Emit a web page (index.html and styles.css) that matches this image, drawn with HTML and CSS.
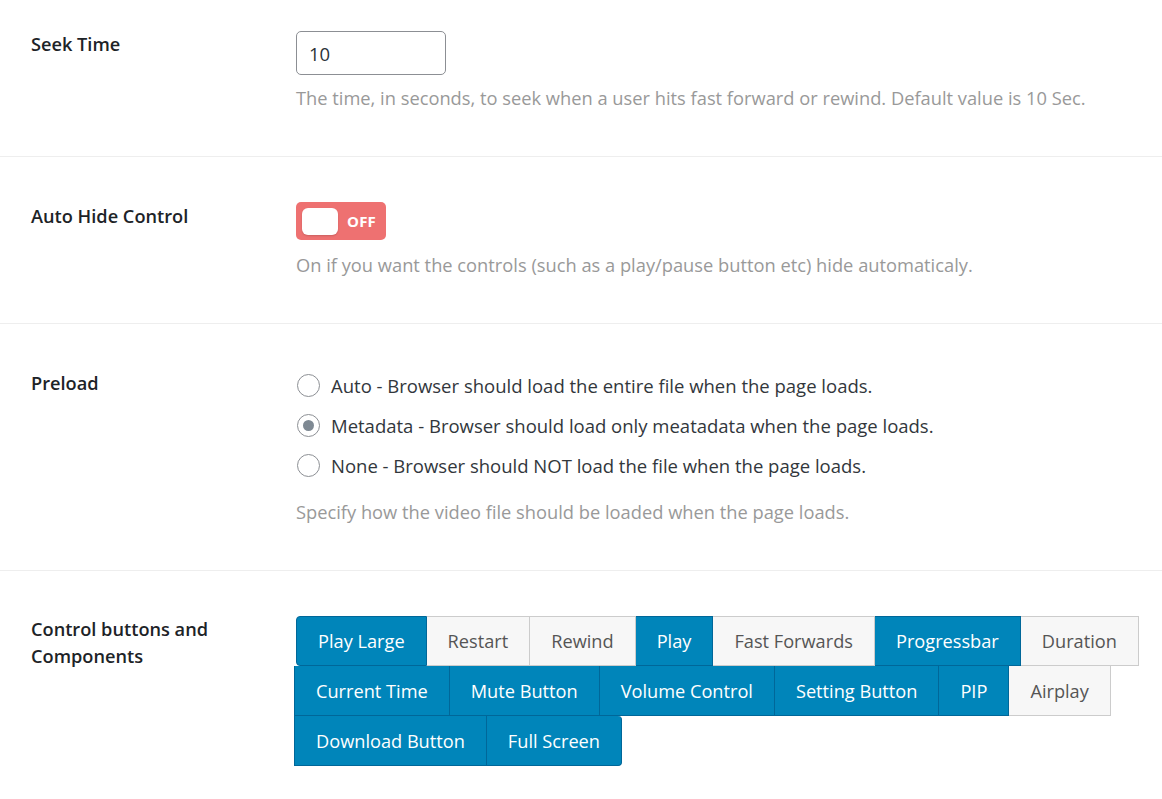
FILE: index.html
```html
<!DOCTYPE html>
<html lang="en">
<head>
<meta charset="utf-8">
<title>Player settings</title>
<link rel="stylesheet" href="styles.css">
</head>
<body>
<div class="settings">
  <div class="row">
    <div class="label">Seek Time</div>
    <div class="field">
      <input class="num" type="text" value="10">
      <p class="desc">The time, in seconds, to seek when a user hits fast forward or rewind. Default value is 10 Sec.</p>
    </div>
  </div>
  <div class="row">
    <div class="label">Auto Hide Control</div>
    <div class="field">
      <div class="toggle"><span class="knob"></span><span class="toggle-text">OFF</span></div>
      <p class="desc desc-toggle">On if you want the controls (such as a play/pause button etc) hide automaticaly.</p>
    </div>
  </div>
  <div class="row">
    <div class="label">Preload</div>
    <div class="field">
      <ul class="radios">
        <li><span class="radio"></span>Auto - Browser should load the entire file when the page loads.</li>
        <li><span class="radio checked"></span>Metadata - Browser should load only meatadata when the page loads.</li>
        <li><span class="radio"></span>None - Browser should NOT load the file when the page loads.</li>
      </ul>
      <p class="desc desc-far">Specify how the video file should be loaded when the page loads.</p>
    </div>
  </div>
  <div class="row row-last">
    <div class="label label-multi">Control buttons and<br>Components</div>
    <div class="field">
      <div class="btn-group">
        <div class="btn-row first-row">
          <span class="btn on first">Play Large</span>
          <span class="btn">Restart</span>
          <span class="btn">Rewind</span>
          <span class="btn on">Play</span>
          <span class="btn">Fast Forwards</span>
          <span class="btn on">Progressbar</span>
          <span class="btn">Duration</span>
        </div>
        <div class="btn-row">
          <span class="btn on">Current Time</span>
          <span class="btn on">Mute Button</span>
          <span class="btn on">Volume Control</span>
          <span class="btn on">Setting Button</span>
          <span class="btn on">PIP</span>
          <span class="btn">Airplay</span>
        </div>
        <div class="btn-row">
          <span class="btn on">Download Button</span>
          <span class="btn on last">Full Screen</span>
        </div>
      </div>
    </div>
  </div>
</div>
</body>
</html>
```
FILE: styles.css
```css
* { box-sizing: border-box; }
html, body { margin: 0; padding: 0; background: #fff; }
body {
  font-family: "Open Sans", "Noto Sans", sans-serif;
  color: #3c434a;
}
.settings { width: 1162px; }
.row {
  display: grid;
  grid-template-columns: 265px 1fr;
  padding: 46px 0 45px 31px;
  border-bottom: 1px solid #eeeeee;
}
.row:first-child { padding-top: 31px; }
.row-last { border-bottom: none; padding-top: 45px; padding-bottom: 32px; }
.label {
  font-size: 18.2px;
  font-weight: 600;
  color: #1d2327;
  line-height: 26px;
}
.label-multi { line-height: 27px; }
.field { min-width: 0; }
.num {
  display: block;
  width: 150px;
  height: 44px;
  border: 1px solid #8c8f94;
  border-radius: 5px;
  padding: 0 12px;
  font: 18.5px "Open Sans", "Noto Sans", sans-serif;
  color: #2c3338;
  background: #fff;
}
.desc {
  margin: 10px 0 0;
  font-size: 18.3px;
  line-height: 26px;
  color: #999999;
}
.desc-toggle { margin-top: 12px; }
.desc-far { margin-top: 19px; }
.toggle {
  width: 90px;
  height: 38px;
  margin-top: -1px;
  background: #ee7171;
  border-radius: 5px;
  display: flex;
  align-items: center;
  padding-left: 6px;
  gap: 9px;
}
.knob {
  width: 36px;
  height: 27px;
  background: #fff;
  border-radius: 6px;
  box-shadow: 0 1px 2px rgba(0,0,0,0.15);
}
.toggle-text {
  color: #fff;
  font-weight: 700;
  font-size: 15px;
  letter-spacing: 0.2px;
}
.radios {
  list-style: none;
  margin: 0;
  padding: 0;
  display: flex;
  flex-direction: column;
  gap: 10px;
}
.radios li {
  display: flex;
  align-items: center;
  height: 30px;
  font-size: 18.5px;
  color: #32373c;
}
.radio {
  width: 23px;
  height: 23px;
  border: 1px solid #8c8f94;
  border-radius: 50%;
  margin: 0 11px 0 1px;
  display: flex;
  align-items: center;
  justify-content: center;
  background: #fff;
  flex: none;
}
.radio.checked::after {
  content: "";
  width: 11px;
  height: 11px;
  border-radius: 50%;
  background: #7e8993;
}
.btn-group {
  display: flex;
  flex-direction: column;
  margin-left: -2px;
}
.btn-row { display: flex; }
.first-row { margin-left: 2px; }
.btn {
  display: flex;
  align-items: center;
  height: 50px;
  padding: 0 21px;
  font-size: 18.2px;
  border: 1px solid #cccccc;
  border-left-width: 0;
  background: #f7f7f7;
  color: #555555;
  white-space: nowrap;
}
.btn-row .btn:first-child { border-left-width: 1px; }
.btn-row + .btn-row .btn { border-top-width: 0; }
.btn.on {
  background: #0085ba;
  border-color: #006799;
  color: #ffffff;
}
.btn.first { border-radius: 4px 0 0 4px; }
.btn.last { border-radius: 0 4px 4px 0; }
```
